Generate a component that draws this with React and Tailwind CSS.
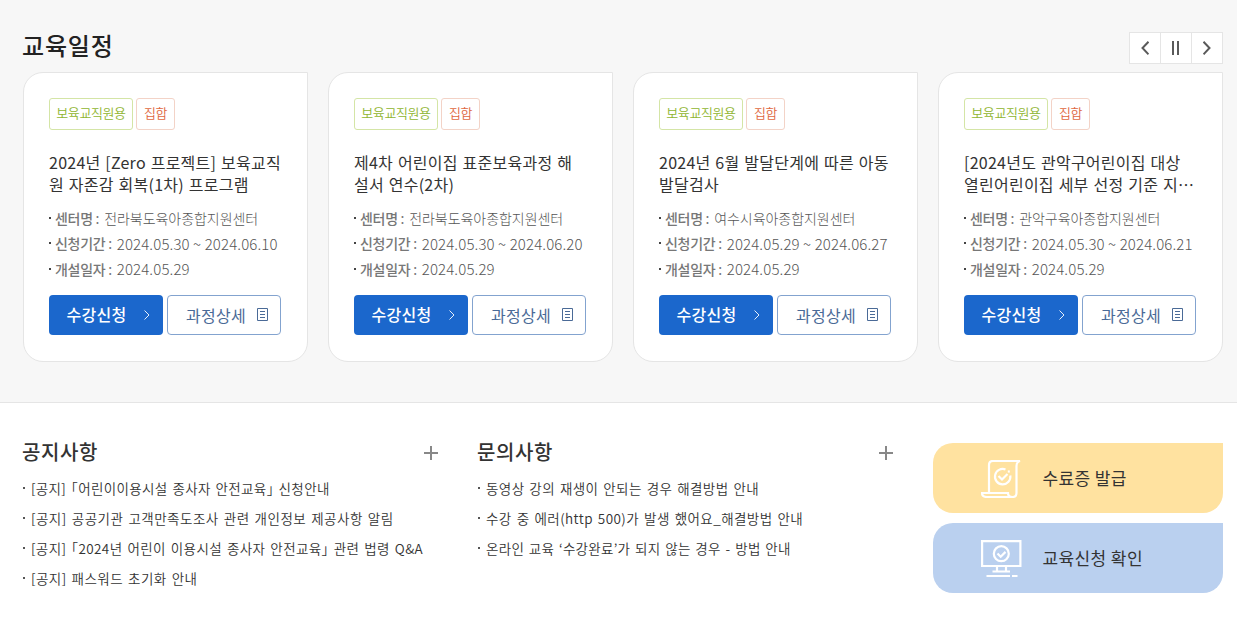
const courses = [
  {
    title: ['2024년 [Zero 프로젝트] 보육교직', '원 자존감 회복(1차) 프로그램'],
    center: '전라북도육아종합지원센터',
    period: '2024.05.30 ~ 2024.06.10',
    date: '2024.05.29',
  },
  {
    title: ['제4차 어린이집 표준보육과정 해', '설서 연수(2차)'],
    center: '전라북도육아종합지원센터',
    period: '2024.05.30 ~ 2024.06.20',
    date: '2024.05.29',
  },
  {
    title: ['2024년 6월 발달단계에 따른 아동', '발달검사'],
    center: '여수시육아종합지원센터',
    period: '2024.05.29 ~ 2024.06.27',
    date: '2024.05.29',
  },
  {
    title: ['[2024년도 관악구어린이집 대상', '열린어린이집 세부 선정 기준 지⋯'],
    center: '관악구육아종합지원센터',
    period: '2024.05.30 ~ 2024.06.21',
    date: '2024.05.29',
  },
];

const notices = [
  { text: '[공지] ｢어린이이용시설 종사자 안전교육｣ 신청안내', tracking: 'tracking-[0.35px]' },
  { text: '[공지] 공공기관 고객만족도조사 관련 개인정보 제공사항 알림', tracking: 'tracking-[0.49px]' },
  { text: '[공지] ｢2024년 어린이 이용시설 종사자 안전교육｣ 관련 법령 Q&A' },
  { text: '[공지] 패스워드 초기화 안내', tracking: 'tracking-[0.46px]' },
];

const questions = [
  { text: '동영상 강의 재생이 안되는 경우 해결방법 안내' },
  { text: '수강 중 에러(http 500)가 발생 했어요_해결방법 안내', tracking: 'tracking-[0.43px]' },
  { text: '온라인 교육 ‘수강완료’가 되지 않는 경우 - 방법 안내', tracking: 'tracking-[0.27px]' },
];

const InfoRow = ({ label, value, numeric }) => (
  <li className="flex h-[25.5px] items-center whitespace-nowrap">
    <span className="mr-1 size-[2px] bg-[#444]" />
    <span className="font-medium tracking-[-0.3px] text-[#777]">
      {label} <span className="font-normal">:</span>
    </span>
    <span
      className={`font-light text-[#555] ${
        numeric ? 'ml-[5px] text-[15px] tracking-[0.12px]' : 'ml-[5px] tracking-[-0.05px]'
      }`}
    >
      {value}
    </span>
  </li>
);

const CourseCard = ({ course }) => (
  <article className="h-[290px] w-[285px] shrink-0 rounded-[20px] rounded-tr-none border border-[#e5e5e5] bg-white px-[25px] pt-[25px]">
    <div className="flex gap-[3px] text-[13px] leading-5 font-[350] tracking-[-0.4px]">
      <span className="flex h-8 w-[84px] justify-center rounded-[3px] border border-[#d4e5a6] pt-1 text-[#8fb52f]">
        보육교직원용
      </span>
      <span className="flex h-8 w-[39px] justify-center rounded-[3px] border border-[#f3d3c7] pt-1 text-[#e0683f]">
        집합
      </span>
    </div>
    <h3 className="mt-[21px] text-base leading-[22px] tracking-[0.25px] whitespace-nowrap text-[#333] [word-spacing:1px]">
      {course.title.map((line) => (
        <span key={line} className="block">{line}</span>
      ))}
    </h3>
    <ul className="mt-[10px] text-sm">
      <InfoRow label="센터명" value={course.center} />
      <InfoRow label="신청기간" value={course.period} numeric />
      <InfoRow label="개설일자" value={course.date} numeric />
    </ul>
    <div className="mt-[13px] flex gap-1 tracking-[0.25px]">
      <button className="flex h-10 w-[114px] items-center rounded bg-[#1b67cc] pl-[17.5px] font-medium text-white">
        <span className="-mt-px">수강신청</span>
        <svg className="ml-[18px]" width="6" height="10" fill="none" stroke="#fff" strokeWidth="0.9">
          <path d="M.5.5 5 5 .5 9.5" />
        </svg>
      </button>
      <button className="flex h-10 w-[114px] items-center rounded border border-[#83a3cf] pl-[18px] text-[#4a6a97]">
        과정상세
        <svg className="ml-[11px]" width="11" height="13" fill="none" stroke="#4a6a97">
          <path d="M.5.5h10v12H.5zM3 3.5h5M3 6.5h5M3 9.5h5" />
        </svg>
      </button>
    </div>
  </article>
);

const Board = ({ title, items }) => (
  <section className="w-[415px]">
    <div className="flex h-5 items-center justify-between">
      <h2 className="-mt-[2px] -ml-px text-xl leading-5 font-medium tracking-[0.6px] text-[#333]">{title}</h2>
      <button aria-label={`${title} 더보기`}>
        <svg width="14" height="14" stroke="#888" strokeWidth="2">
          <path d="M7 0v14M0 7h14" />
        </svg>
      </button>
    </div>
    <ul className="mt-[10px] text-[13.5px] font-[350] text-[#333] [word-spacing:1.5px]">
      {items.map((item) => (
        <li
          key={item.text}
          className={`flex h-[30px] items-center whitespace-nowrap ${item.tracking || 'tracking-[0.4px]'}`}
        >
          <span className="mr-[6px] size-[2px] bg-[#555]" />
          {item.text}
        </li>
      ))}
    </ul>
  </section>
);

const CertificateIcon = () => (
  <svg className="mt-[2px]" width="40" height="38" fill="none" stroke="#fff" strokeWidth="2.2">
    <path d="M8 32V5q0-4 4-4h27q-3.500 1-3.500 5v27q0 4-4 4H6q-5 0-5-4h26q0 4 4.500 4" />
    <path d="M24.500 9.500a7.700 7.700 0 1 0 4.800 6M17.500 16l3.500 3.500 5.500-5.500" />
    <path d="M26.800 11.500h2" />
  </svg>
);

const MonitorIcon = () => (
  <svg className="mt-[2px]" width="41" height="38" fill="none" stroke="#fff" strokeWidth="2.2">
    <path d="M15 26H1.100V1.100h38.300V26H25M16 31v-5h9v5M11.500 31.500h17.500M5.500 36H29M31 36h5.500" />
    <circle cx="20.300" cy="13.700" r="7.500" />
    <path d="m16.500 13.500 3.200 3.200 4.800-4.800" />
  </svg>
);

const App = () => (
  <main className="h-[619px] w-[1237px] overflow-hidden bg-white font-['Noto_Sans_CJK_KR',sans-serif]">
    <section className="h-[403px] border-b border-[#e5e5e5] bg-[#f7f7f7] pt-8 pr-[14px] pl-[23px]">
      <div className="flex h-10 items-start justify-between">
        <h2 className="-mt-[2px] -ml-px text-2xl leading-[30px] font-medium tracking-[0.8px] text-[#222]">교육일정</h2>
        <div className="flex h-8 w-[94px] divide-x divide-[#e5e5e5] border border-[#e5e5e5] bg-white text-[#5a5a5a]">
          <button aria-label="이전" className="flex w-[31px] items-center justify-center">
            <svg width="8" height="14" fill="none" stroke="currentColor" strokeWidth="2">
              <path d="M7.500.7 1.500 7l6 6.300" />
            </svg>
          </button>
          <button aria-label="정지" className="flex w-[31px] items-center justify-center gap-[3px] pr-px">
            <span className="h-[14px] w-[2px] bg-[#5a5a5a]" />
            <span className="h-[14px] w-[2px] bg-[#5a5a5a]" />
          </button>
          <button aria-label="다음" className="flex w-[30px] items-center justify-center">
            <svg width="8" height="14" fill="none" stroke="currentColor" strokeWidth="2">
              <path d="m.5.7 6 6.300-6 6.300" />
            </svg>
          </button>
        </div>
      </div>
      <div className="flex gap-5">
        {courses.map((course) => (
          <CourseCard key={course.title[0]} course={course} />
        ))}
      </div>
    </section>
    <div className="flex gap-10 pt-10 pl-[23px]">
      <Board title="공지사항" items={notices} />
      <Board title="문의사항" items={questions} />
      <div className="flex w-[290px] flex-col gap-[10px] text-[17px] tracking-[0.4px] text-[#333]">
        <a className="flex h-[70px] items-center rounded-[20px] rounded-tr-none bg-[#ffe2a0] pl-12">
          <CertificateIcon />
          <span className="-mt-px ml-[21.5px]">수료증 발급</span>
        </a>
        <a className="flex h-[70px] items-center rounded-[20px] rounded-tr-none bg-[#bad0ef] pl-12">
          <MonitorIcon />
          <span className="-mt-px ml-[20.5px]">교육신청 확인</span>
        </a>
      </div>
    </div>
  </main>
);

export default App;
